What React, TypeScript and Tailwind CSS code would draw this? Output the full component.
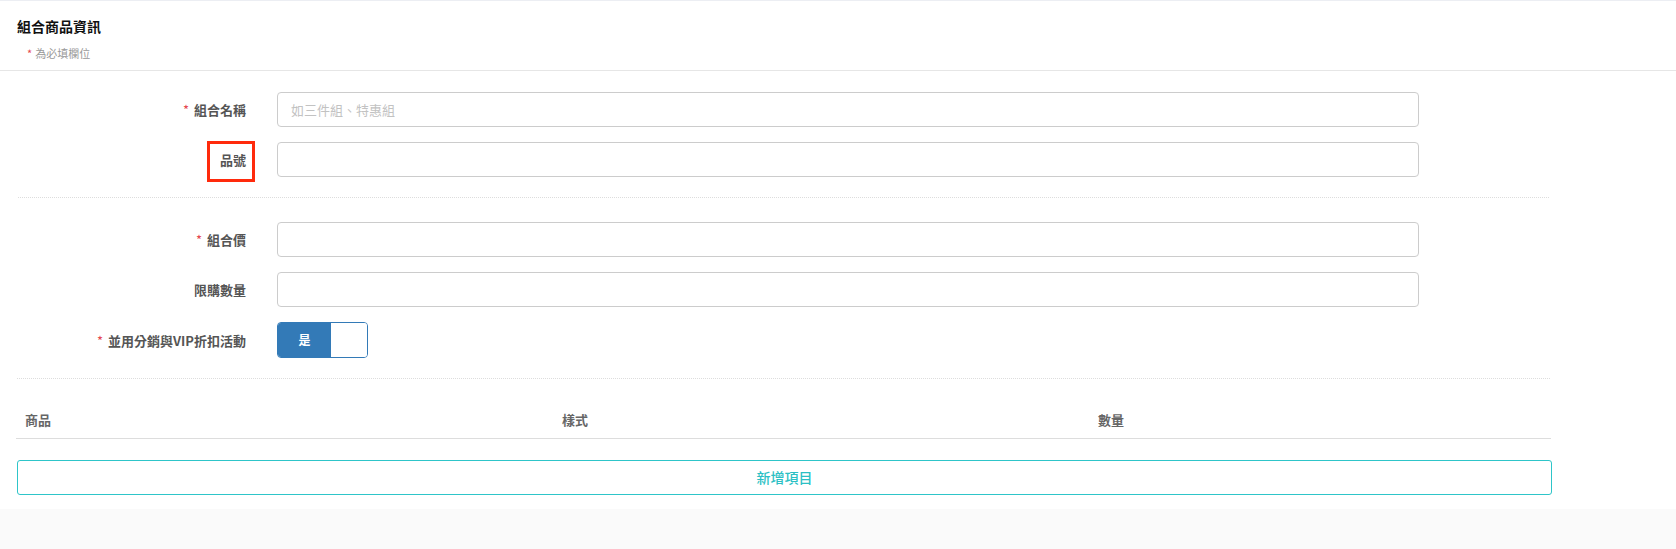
const font = { fontFamily: '"Noto Sans CJK TC", "Liberation Sans", sans-serif' };

function Label({ text, required }: { text: string; required?: boolean }) {
  return (
    <div className="w-[230px] shrink-0 text-right text-[13px] font-bold text-[#555] leading-[35px]">
      {required && <span className="text-[#e5474f] mr-[5px] font-normal">*</span>}
      {text}
    </div>
  );
}

function Field({ label, required, placeholder }: { label: string; required?: boolean; placeholder?: string }) {
  return (
    <div className="flex items-center gap-[31px]">
      <Label text={label} required={required} />
      <input
        className="w-[1142px] h-[35px] border border-[#ccc] rounded-[4px] px-[13px] text-[13px] text-[#555] placeholder:text-[#c2c2c2] outline-none"
        placeholder={placeholder}
      />
    </div>
  );
}

export default function App() {
  return (
    <div className="w-full h-[549px] bg-[#fafafa] text-[#333]" style={font}>
      <div className="bg-white border-t border-[#eceef3]">
        {/* header */}
        <div className="h-[70px] border-b border-[#e6e6e6] px-[17px] pt-[15px]">
          <div className="text-[14px] font-bold text-[#111] leading-[20px]">組合商品資訊</div>
          <div className="mt-[10px] pl-[10px] text-[11px] text-[#999] leading-[14px]">
            <span className="text-[#e5474f] mr-[3px]">*</span>為必填欄位
          </div>
        </div>

        <div className="w-[1567px] px-[16px] pb-[14px]">
          {/* basic */}
          <div className="pt-[21px] flex flex-col gap-[15px]">
            <Field label="組合名稱" required placeholder="如三件組、特惠組" />
            <div className="flex items-center gap-[31px]">
              <div className="relative w-[230px] shrink-0 text-right text-[13px] font-bold text-[#555] leading-[35px]">
                品號
                <div className="absolute right-[-9px] top-[-1px] w-[48px] h-[41px] border-[3px] border-[#ff2a0c]" />
              </div>
              <input className="w-[1142px] h-[35px] border border-[#ccc] rounded-[4px] px-[13px] text-[13px] outline-none" />
            </div>
          </div>

          <div className="mt-[20px] mx-[2px] border-t border-dotted border-[#ddd]" />

          {/* price */}
          <div className="pt-[24px] flex flex-col gap-[15px]">
            <Field label="組合價" required />
            <Field label="限購數量" />
            <div className="flex items-center gap-[31px]">
              <Label text="並用分銷與VIP折扣活動" required />
              <div className="flex w-[91px] h-[36px] border border-[#337ab7] rounded-[4px] overflow-hidden">
                <div className="w-[53px] bg-[#337ab7] text-white text-[12px] font-bold flex items-center justify-center">是</div>
                <div className="flex-1 bg-white" />
              </div>
            </div>
          </div>

          <div className="mt-[20px] mx-[1px] border-t border-dotted border-[#ddd]" />

          {/* table */}
          <div className="mt-[20px] w-[1535px]">
            <div className="grid grid-cols-[537px_536px_1fr] h-[40px] border-b border-[#ddd] text-[13px] font-bold text-[#666]">
              <div className="pl-[9px] pt-[11px]">商品</div>
              <div className="pl-[9px] pt-[11px]">樣式</div>
              <div className="pl-[9px] pt-[11px]">數量</div>
            </div>
            <button className="mt-[21px] w-full h-[35px] ml-[1px] border border-[#2ec5c9] rounded-[3px] text-[#2bbfc4] text-[14px] font-medium bg-white">
              新增項目
            </button>
          </div>
        </div>
      </div>
    </div>
  );
}
